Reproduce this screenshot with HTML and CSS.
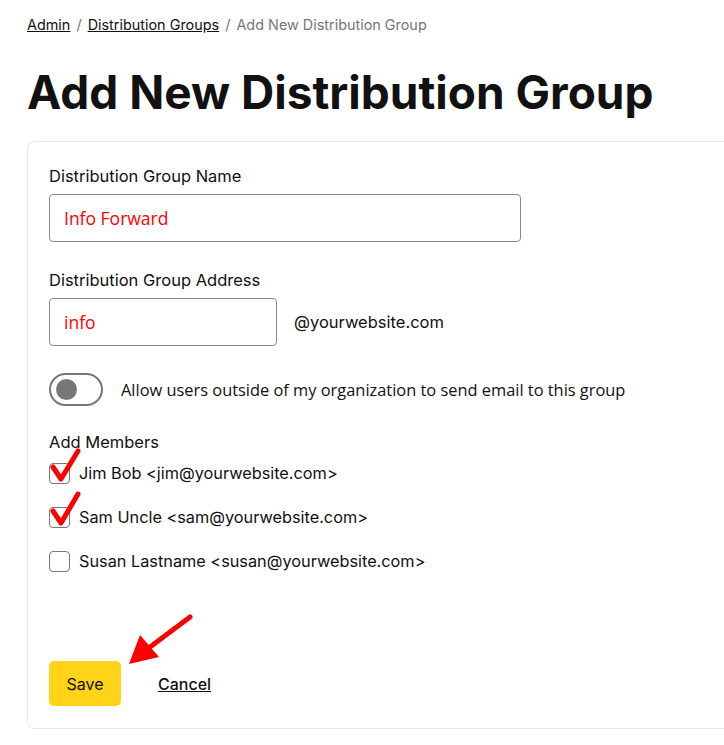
FILE: index.html
```html
<!DOCTYPE html>
<html lang="en">
<head>
  <meta charset="UTF-8">
  <meta name="viewport" content="width=device-width, initial-scale=1.0">
  <title>Add New Distribution Group</title>
  <link rel="stylesheet" href="styles.css">
</head>
<body>
  <div class="page">
    <nav class="crumbs">
      <a href="#">Admin</a>
      <span class="sep">/</span>
      <a href="#">Distribution Groups</a>
      <span class="sep">/</span>
      <span class="current">Add New Distribution Group</span>
    </nav>

    <h1>Add New Distribution Group</h1>

    <form class="card">
      <div class="field">
        <label for="groupName">Distribution Group Name</label>
        <input type="text" id="groupName" class="input wide" value="Info Forward">
      </div>

      <div class="field">
        <label for="groupAddress">Distribution Group Address</label>
        <div class="address-row">
          <input type="text" id="groupAddress" class="input short" value="info">
          <span class="domain">@yourwebsite.com</span>
        </div>
      </div>

      <div class="toggle-row">
        <span class="toggle"><span class="knob"></span></span>
        <span class="toggle-text">Allow users outside of my organization to send email to this group</span>
      </div>

      <div class="members">
        <div class="members-title">Add Members</div>
        <label class="member"><span class="box"></span>Jim Bob &lt;jim@yourwebsite.com&gt;</label>
        <label class="member"><span class="box"></span>Sam Uncle &lt;sam@yourwebsite.com&gt;</label>
        <label class="member"><span class="box"></span>Susan Lastname &lt;susan@yourwebsite.com&gt;</label>
      </div>

      <div class="actions">
        <button type="button" class="save">Save</button>
        <a href="#" class="cancel">Cancel</a>
      </div>
    </form>

    <!-- annotations drawn over the screenshot -->
    <svg class="marks" width="724" height="745" viewBox="0 0 724 745">
      <path d="M53 467 L61 479 L78 451" fill="none" stroke="#f00" stroke-width="5" stroke-linecap="round" stroke-linejoin="round"/>
      <path d="M53 511 L61 523 L78 494" fill="none" stroke="#f00" stroke-width="5" stroke-linecap="round" stroke-linejoin="round"/>
      <line x1="190" y1="617" x2="150" y2="647" stroke="#f00" stroke-width="5" stroke-linecap="round"/>
      <polygon points="129,664 140,635 159,657" fill="#f00"/>
    </svg>
  </div>
</body>
</html>
```

FILE: styles.css
```css
body {
  margin: 0;
  font-family: Inter, "Open Sans", sans-serif;
  color: #111;
  background: #fff;
  overflow: hidden;
}
.page {
  position: relative;
  padding: 14px 0 0 27px;
}
.crumbs {
  font-size: 14.4px;
  line-height: 22px;
  color: #767676;
}
.crumbs a {
  color: #111;
  text-decoration: underline;
}
.crumbs .sep {
  margin: 0 2px;
}
h1 {
  font-size: 46px;
  font-weight: 700;
  line-height: 56px;
  margin: 28px 0 21px;
  white-space: nowrap;
}
.card {
  border: 1px solid #e8e8e8;
  border-right: none;
  border-radius: 8px 0 0 8px;
  padding: 23px 0 22px 21px;
}
.field {
  margin-bottom: 27px;
}
.field label {
  display: block;
  font-size: 16.5px;
  line-height: 22px;
  margin-bottom: 7px;
}
.input {
  box-sizing: border-box;
  height: 48px;
  border: 1px solid #8a8a8a;
  border-radius: 4px;
  padding: 0 14px;
  font-family: "Open Sans", sans-serif;
  font-size: 17.5px;
  color: #f00;
}
.wide { width: 472px; }
.short { width: 228px; }
.address-row {
  display: flex;
  align-items: center;
  gap: 17px;
}
.domain {
  font-size: 16.5px;
}
.toggle-row {
  display: flex;
  align-items: center;
  gap: 18px;
  margin-top: 23px;
}
.toggle {
  box-sizing: border-box;
  width: 54px;
  height: 33px;
  border: 2px solid #777;
  border-radius: 17px;
  display: flex;
  align-items: center;
  padding-left: 5px;
}
.knob {
  width: 21px;
  height: 21px;
  border-radius: 50%;
  background: #777;
}
.toggle-text {
  font-family: "Open Sans", sans-serif;
  font-size: 16.4px;
}
.members {
  margin-top: 25px;
}
.members-title {
  font-size: 16.5px;
  line-height: 22px;
  margin-bottom: 9px;
}
.member {
  display: flex;
  align-items: center;
  gap: 9px;
  font-size: 16.3px;
  height: 22px;
  margin-bottom: 22px;
}
.box {
  box-sizing: border-box;
  width: 21px;
  height: 21px;
  border: 1px solid #777;
  border-radius: 4px;
}
.actions {
  display: flex;
  align-items: center;
  gap: 37px;
  margin-top: 89px;
}
.save {
  width: 72px;
  height: 45px;
  border: none;
  border-radius: 5px;
  background: #fed318;
  color: #111;
  font-family: Inter, sans-serif;
  font-size: 16px;
}
.cancel {
  color: #111;
  font-size: 16px;
  font-weight: 500;
  text-decoration: underline;
}
.marks {
  position: absolute;
  left: 0;
  top: 0;
  pointer-events: none;
}
```
